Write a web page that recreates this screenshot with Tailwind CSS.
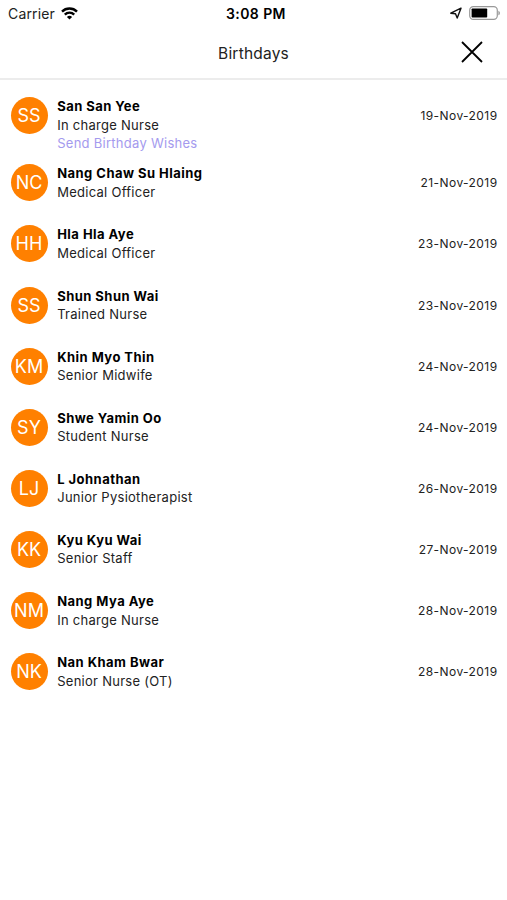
<!DOCTYPE html>
<html lang="en">
  <head>
    <meta charset="UTF-8" />
    <meta name="viewport" content="width=device-width, initial-scale=1.0" />
    <title>Birthdays</title>
    <script src="https://cdn.jsdelivr.net/npm/@tailwindcss/browser@4"></script>
  </head>
  <body class="bg-white font-['Inter',sans-serif] text-black h-screen overflow-hidden">
    <!-- Status bar -->
    <div class="grid grid-cols-3 items-center h-[26px] pl-2 pr-1.5">
      <div class="flex items-center gap-1.5 text-[14px] tracking-[0.15px] text-[#222]">
        <span>Carrier</span>
        <svg class="w-[17px] h-[13px]" viewBox="0 0 17 13" fill="none" stroke="#000" stroke-width="2.4">
          <path d="M1 4.6a10.6 10.6 0 0 1 15 0" />
          <path d="M3.8 7.6a6.6 6.6 0 0 1 9.4 0" />
          <path d="M8.5 12.6 5.9 10a3.7 3.7 0 0 1 5.2 0z" fill="#000" stroke="none" />
        </svg>
      </div>
      <div class="pl-[3px] text-center text-[14px] font-semibold tracking-[0.4px]">3:08 PM</div>
      <div class="flex items-center justify-end gap-[7px]">
        <svg class="w-3 h-3" viewBox="0 0 12 12" fill="none" stroke="#111" stroke-width="1.4" stroke-linejoin="round">
          <path d="M11 1.2.8 6.2l4.7.5 1.7 4.4z" />
        </svg>
        <svg class="w-8 h-3.5" viewBox="0 0 32 14">
          <rect x=".7" y=".6" width="27.6" height="12.8" rx="3.6" fill="none" stroke="#999" stroke-width="1.2" />
          <rect x="2.6" y="2.4" width="15.6" height="9.2" rx=".8" />
          <path d="M29.4 4.7c2 .8 2 3.8 0 4.6z" fill="#999" />
        </svg>
      </div>
    </div>

    <!-- Header -->
    <header class="grid grid-cols-3 items-center h-[54px] pt-1 border-b-2 border-[#ececec]">
      <h1 class="col-start-2 text-center text-[15.5px] tracking-[0.2px] text-[#222]">Birthdays</h1>
      <button class="justify-self-end mr-6 -mt-1">
        <svg class="w-[22px] h-[22px]" viewBox="0 0 22 22" stroke="#000" stroke-width="1.8">
          <path d="m1 1 20 20M21 1 1 21" />
        </svg>
      </button>
    </header>

    <ul id="birthdayList" class="pt-[17.4px]"></ul>

    <script>
      const staff = [
        { initials: "SS", name: "San San Yee", role: "In charge Nurse", date: "19-Nov-2019", wish: true },
        { initials: "NC", name: "Nang Chaw Su Hlaing", role: "Medical Officer", date: "21-Nov-2019" },
        { initials: "HH", name: "Hla Hla Aye", role: "Medical Officer", date: "23-Nov-2019" },
        { initials: "SS", name: "Shun Shun Wai", role: "Trained Nurse", date: "23-Nov-2019" },
        { initials: "KM", name: "Khin Myo Thin", role: "Senior Midwife", date: "24-Nov-2019" },
        { initials: "SY", name: "Shwe Yamin Oo", role: "Student Nurse", date: "24-Nov-2019" },
        { initials: "LJ", name: "L Johnathan", role: "Junior Pysiotherapist", date: "26-Nov-2019" },
        { initials: "KK", name: "Kyu Kyu Wai", role: "Senior Staff", date: "27-Nov-2019" },
        { initials: "NM", name: "Nang Mya Aye", role: "In charge Nurse", date: "28-Nov-2019" },
        { initials: "NK", name: "Nan Kham Bwar", role: "Senior Nurse (OT)", date: "28-Nov-2019" },
      ];

      const list = document.getElementById("birthdayList");

      staff.forEach((person) => {
        list.innerHTML += `
          <li class="flex items-start pl-[10.5px] pr-[9.5px] ${person.wish ? "h-[67px]" : "h-[61.1px]"}">
            <div class="w-[37px] h-[37px] rounded-full bg-[#ff8000] text-white text-[18px] flex items-center justify-center shrink-0">${person.initials}</div>
            <div class="ml-[9.7px] flex-1 text-[13px] leading-[18.5px] tracking-[0.27px]">
              <p class="font-bold tracking-[0.46px]">${person.name}</p>
              <p class="text-[#222]">${person.role}</p>
              ${person.wish ? '<a class="block text-[#a49aee]">Send Birthday Wishes</a>' : ""}
            </div>
            <div class="text-[12px] leading-[37px] tracking-[0.42px] text-[#222]">${person.date}</div>
          </li>`;
      });
    </script>
  </body>
</html>
